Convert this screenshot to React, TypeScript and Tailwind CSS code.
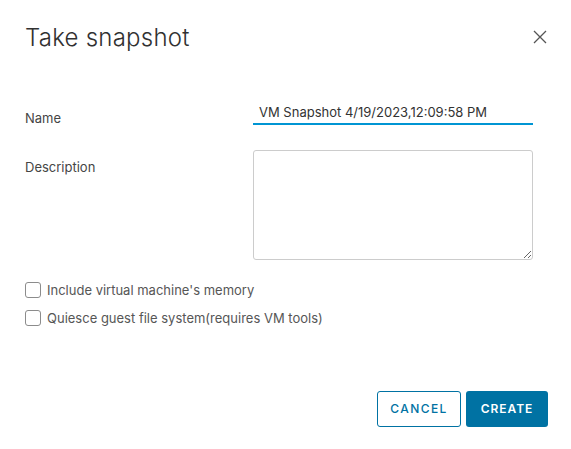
import React from 'react';

export default function App() {
  return (
    <div className="w-[571px] h-[449px] bg-white flex flex-col font-['Inter',sans-serif] text-[#454545]">
      {/* Header */}
      <div className="flex items-start justify-between pl-[25px] pr-[24px] pt-[23px]">
        <h1 className="text-[24px] leading-[30px] font-light tracking-[0.01em] text-[#313131]">Take snapshot</h1>
        <button className="mt-[7px] w-[14px] h-[14px] text-[#555]">
          <svg viewBox="0 0 14 14" width="14" height="14" fill="none" stroke="currentColor" strokeWidth="1.3">
            <path d="M1 1L13 13M13 1L1 13" />
          </svg>
        </button>
      </div>

      {/* Form */}
      <div className="pl-[25px] mt-[47px]">
        <div className="flex h-[25px]">
          <label className="w-[228px] pt-[12px] text-[13px] leading-[13px]">Name</label>
          <div className="w-[280px] h-[25px] border-b-2 border-[#0095d3] pl-[6px] pt-[4px] text-[13px] leading-[16px] text-[#333]">
            VM Snapshot 4/19/2023,12:09:58 PM
          </div>
        </div>
        <div className="flex mt-[25px]">
          <label className="w-[228px] pt-[9px] text-[13px] leading-[16px]">Description</label>
          <textarea className="block w-[280px] h-[110px] border border-[#ccc] rounded-[3px] outline-none" />
        </div>
        <div className="mt-[22px] flex flex-col gap-[12px]">
          <label className="flex items-center gap-[6px] text-[13px] leading-[16px] text-[#565656]">
            <span className="w-[16px] h-[16px] border border-[#8c8c8c] rounded-[3px] bg-white" />
            Include virtual machine's memory
          </label>
          <label className="flex items-center gap-[6px] text-[13px] leading-[16px] text-[#565656]">
            <span className="w-[16px] h-[16px] border border-[#8c8c8c] rounded-[3px] bg-white" />
            Quiesce guest file system(requires VM tools)
          </label>
        </div>
      </div>

      {/* Footer */}
      <div className="flex justify-end gap-[5px] pr-[23px] mt-[65px]">
        <button className="w-[84px] h-[36px] border border-[#0072a3] rounded-[3px] text-[#0072a3] text-[12px] font-medium tracking-[0.12em]">
          CANCEL
        </button>
        <button className="w-[82px] h-[36px] bg-[#0072a3] rounded-[3px] text-white text-[12px] font-semibold tracking-[0.08em]">
          CREATE
        </button>
      </div>
    </div>
  );
}
